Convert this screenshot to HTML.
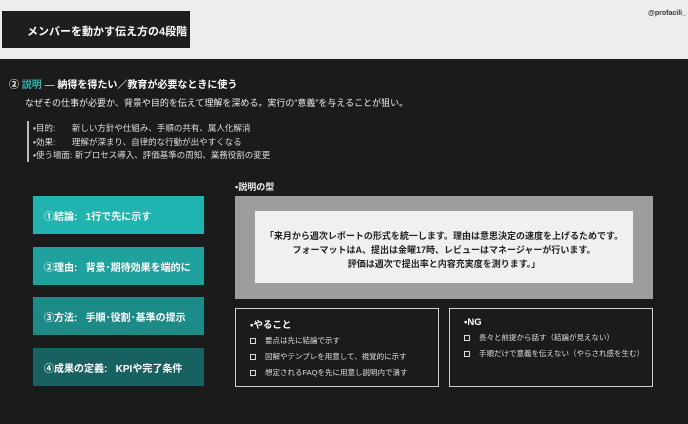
<!DOCTYPE html>
<html><head><meta charset="utf-8"><style>
*{margin:0;padding:0;box-sizing:border-box}
body{width:688px;height:424px;overflow:hidden;background:#1b1b1b;font-family:"Liberation Sans","Noto Sans CJK JP",sans-serif;position:relative;color:#e8e8e8}
.a{position:absolute;white-space:nowrap}
.top{left:0;top:0;width:688px;height:59px;background:#eceeed}
.title{left:2px;top:11px;width:188px;height:37px;background:#1e1e1e;color:#fff;font-size:11px;font-weight:bold;padding:12px 0 0 25px}
.lb{left:33px;width:171px;height:38px;color:#fff;font-size:10px;font-weight:bold;padding:12px 0 0 11px}
.box{border:1.5px solid #cfcfcf;background:#1b1b1b}
.chk{font-size:7.5px;color:#ddd;line-height:16px}
.chk span{display:inline-block;width:6px;height:6px;border:1px solid #ddd;margin-right:9px;vertical-align:-0.5px}
</style></head><body>
<div class="a top"></div>
<div class="a" style="right:2px;top:10px;font-size:7px;font-weight:bold;color:#333">@profacili_</div>
<div class="a title">メンバーを動かす伝え方の4段階</div>
<div class="a" style="left:9px;top:76px;font-size:10px;font-weight:bold;color:#fff">② <span style="color:#2ab8b3">説明</span> <span style="color:#aaa">—</span> 納得を得たい／教育が必要なときに使う</div>
<div class="a" style="left:25px;top:96px;font-size:9px;color:#eee">なぜその仕事が必要か、背景や目的を伝えて理解を深める。実行の“意義”を与えることが狙い。</div>
<div class="a" style="left:27px;top:121px;width:1.5px;height:41px;background:#bbb"></div>
<div class="a" style="left:33px;top:122px;font-size:8.5px;line-height:13.5px;color:#ddd">▪目的:&nbsp;&nbsp;&nbsp;&nbsp;&nbsp;&nbsp;&nbsp;新しい方針や仕組み、手順の共有、属人化解消<br>▪効果:&nbsp;&nbsp;&nbsp;&nbsp;&nbsp;&nbsp;&nbsp;理解が深まり、自律的な行動が出やすくなる<br>▪使う場面: 新プロセス導入、評価基準の周知、業務役割の変更</div>
<div class="a lb" style="top:196px;background:#1fb4af">①結論:&nbsp;&nbsp;&nbsp;1行で先に示す</div>
<div class="a lb" style="top:247px;background:#1fa19e">②理由:&nbsp;&nbsp;&nbsp;背景･期待効果を端的に</div>
<div class="a lb" style="top:297px;background:#1c8b88">③方法:&nbsp;&nbsp;&nbsp;手順･役割･基準の提示</div>
<div class="a lb" style="top:348px;background:#176260">④成果の定義:&nbsp;&nbsp;&nbsp;KPIや完了条件</div>
<div class="a" style="left:235px;top:180px;font-size:9px;font-weight:bold;color:#eee">▪説明の型</div>
<div class="a" style="left:235px;top:196px;width:418px;height:103px;background:#9d9d9d"></div>
<div class="a" style="left:255px;top:211px;width:378px;height:72px;background:#f0f0f0;color:#222;font-size:9px;font-weight:bold;text-align:center;line-height:14px;padding-top:18px">「来月から週次レポートの形式を統一します。理由は意思決定の速度を上げるためです。<br>フォーマットはA、提出は金曜17時、レビューはマネージャーが行います。<br>評価は週次で提出率と内容充実度を測ります。」</div>
<div class="a box" style="left:235px;top:308px;width:204px;height:79px;padding:8px 0 0 14px">
<div style="font-size:9.5px;font-weight:bold;color:#fff;margin-bottom:2px">▪やること</div>
<div class="chk"><span></span>要点は先に結論で示す</div>
<div class="chk"><span></span>図解やテンプレを用意して、視覚的に示す</div>
<div class="chk"><span></span>想定されるFAQを先に用意し説明内で潰す</div>
</div>
<div class="a box" style="left:449px;top:308px;width:204px;height:79px;padding:8px 0 0 14px">
<div style="font-size:9.5px;font-weight:bold;color:#fff;margin-bottom:2px">▪NG</div>
<div class="chk"><span></span>長々と前提から話す（結論が見えない）</div>
<div class="chk"><span></span>手順だけで意義を伝えない（やらされ感を生む）</div>
</div>
</body></html>
